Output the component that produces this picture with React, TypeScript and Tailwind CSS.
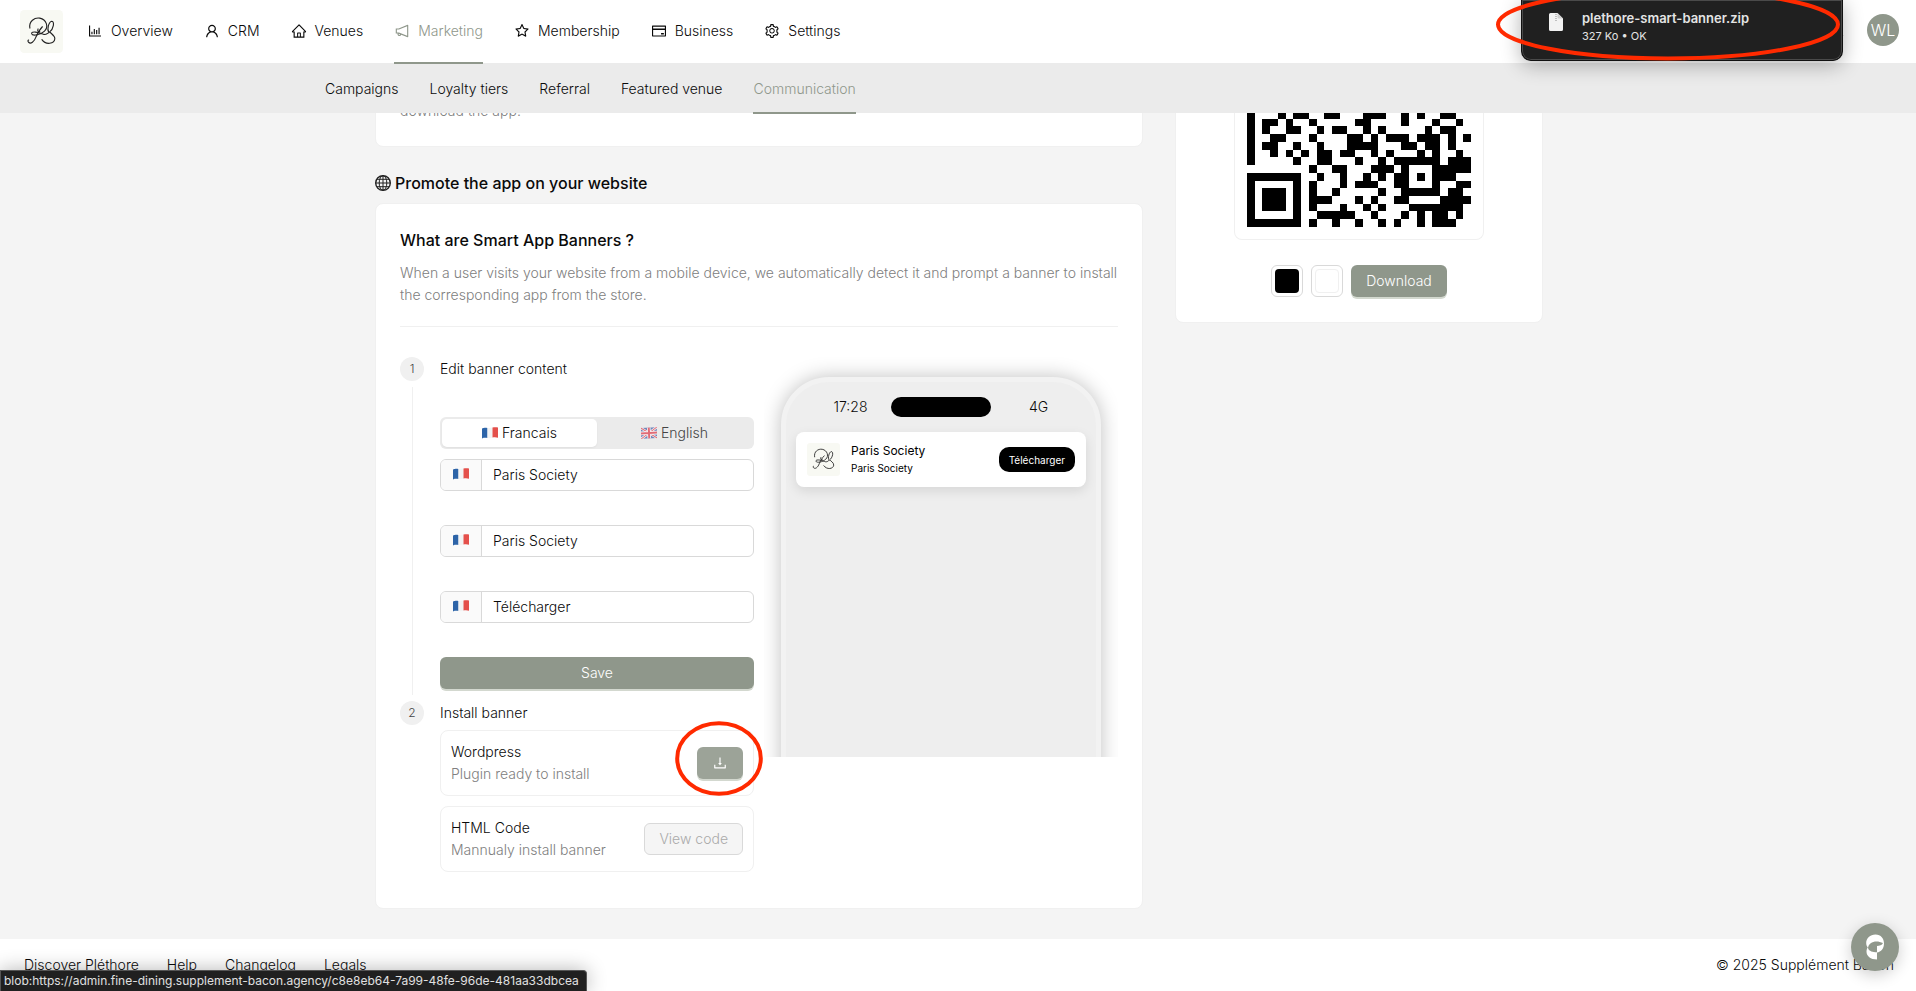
import type { ReactNode } from "react";
import {
  AiOutlineBarChart,
  AiOutlineCreditCard,
  AiOutlineDownload,
  AiOutlineHome,
  AiOutlineNotification,
  AiOutlineSearch,
  AiOutlineSetting,
  AiOutlineStar,
  AiOutlineUser,
} from "react-icons/ai";

const mainNav = [
  { label: "Overview", icon: AiOutlineBarChart },
  { label: "CRM", icon: AiOutlineUser },
  { label: "Venues", icon: AiOutlineHome },
  { label: "Marketing", icon: AiOutlineNotification, active: true },
  { label: "Membership", icon: AiOutlineStar },
  { label: "Business", icon: AiOutlineCreditCard },
  { label: "Settings", icon: AiOutlineSetting },
];

const subNav = [
  { label: "Campaigns" },
  { label: "Loyalty tiers" },
  { label: "Referral" },
  { label: "Featured venue" },
  { label: "Communication", active: true },
];

const qrRows = [
  "#...#.##..##...###..#.#..##..",
  "#.##.#..#.....##....#...#..#.",
  "#.#..##..#.##..#.#.....#.##..",
  "#..##...#....##.#.###.###.#.#",
  "#.##..#..#...####...##.##.#..",
  "#..#.#.#.##.##..#.#...#.#..#.",
  "#.....#..##...#..#.######.###",
  "........#..##...###.#...#####",
  "#######..#..#..#.#.##.#.###..",
  "#.....#.#...#.###..##...#..##",
  "#.###.#.#..#.....#..#####.##.",
  "#.###.#.###...#.#..##....####",
  "#.###.#.#...#..#.#...#######.",
  "#.....#..#####..#...#.#.##.#.",
  "#######.#..#..#..#.#..#.###..",
];

function Logo({ className }: { className: string }) {
  return (
    <svg viewBox="0 0 100 100" fill="none" className={className}>
      <rect width="100" height="100" rx="10" fill="#f8f9f3" />
      <g stroke="#222" strokeWidth="2.6" strokeLinecap="round">
        <path d="M23 42C20 26 34 17 46 19C62 22 67 40 57 49C49 57 29 62 27 55C26 49 43 51 53 56C58 58 62 57 65 54" />
        <path d="M52 39C45 46 41 54 37 63C33 74 25 80 20 75C18 73 18 71 20 70" />
        <path d="M42 44C40 49 42 51 46 50" />
        <path d="M67 53C62 44 67 27 74 26C81 27 78 44 69 51C72 55 81 59 81 67C80 79 60 82 51 69" />
      </g>
    </svg>
  );
}

function QrCode() {
  return (
    <svg
      viewBox="0 0 29 15"
      shapeRendering="crispEdges"
      role="img"
      className="block w-56"
    >
      {qrRows.map((row, y) =>
        row
          .split("")
          .map((cell, x) =>
            cell === "#" ? (
              <rect key={`${x}-${y}`} x={x} y={y} width="1" height="1" />
            ) : null,
          ),
      )}
    </svg>
  );
}

function FrenchFlag() {
  return (
    <svg viewBox="0 0 16 12" className="inline-block h-3 w-4 shrink-0">
      <path d="M0 1.4C2 .4 3.6.8 5.5 1v10C3.6 10.800 2 10.600 0 11.400Z" fill="#2d64a8" />
      <path d="M5.500 1C7.500 1.300 9 1 10.500.6v10c-1.500.5-3 .7-5 .4Z" fill="#f3f3f3" />
      <path d="M10.500.6C12.500 0 14.500.2 16 .5v10.200c-1.500-.4-3.500-.7-5.500-.1Z" fill="#e4504b" />
    </svg>
  );
}

function BritishFlag() {
  return (
    <svg viewBox="0 0 16 12" className="inline-block h-3 w-4 shrink-0 opacity-70">
      <g transform="rotate(-3 8 6)">
        <rect y=".6" width="16" height="10.800" fill="#3b5ba5" />
        <path d="M0 .6L16 11.400M16 .6L0 11.400" stroke="#fff" strokeWidth="2.400" />
        <path d="M0 .6L16 11.400M16 .6L0 11.400" stroke="#dc3545" strokeWidth="1" />
        <path d="M8 .6v10.800M0 6h16" stroke="#fff" strokeWidth="3.600" />
        <path d="M8 .6v10.800M0 6h16" stroke="#dc3545" strokeWidth="2" />
      </g>
    </svg>
  );
}

function GlobeIcon() {
  return (
    <svg
      viewBox="0 0 16 16"
      fill="none"
      stroke="#222"
      strokeWidth="1"
      className="size-4 shrink-0"
    >
      <circle cx="8" cy="8" r="7.300" strokeWidth="1.400" />
      <ellipse cx="8" cy="8" rx="3.800" ry="7.300" />
      <path d="M8 .7v14.600M.7 8h14.600M2 4.300h12M2 11.700h12" />
    </svg>
  );
}

function Card({ className = "", children }: { className?: string; children: ReactNode }) {
  return (
    <div className={`rounded-lg border border-[#f0f0f0] bg-white p-6 ${className}`}>
      {children}
    </div>
  );
}

function Header() {
  return (
    <header className="relative z-10">
      <div className="flex h-[63px] items-center bg-white pl-5 pr-[17px]">
        <a href="#home" className="mr-6">
          <Logo className="size-[43px]" />
        </a>
        <nav className="flex h-full gap-[31px]">
          {mainNav.map(({ label, icon: Icon, active }) => (
            <a
              key={label}
              href={`#${label.toLowerCase()}`}
              className={`relative flex items-center gap-2 pb-0.5 ${active ? "text-[#8f978b]" : ""}`}
            >
              <Icon className="size-4" />
              {label}
              {active && <span className="absolute inset-x-0 -bottom-px h-0.5 bg-[#8f978b]" />}
            </a>
          ))}
        </nav>
        <div className="ml-auto flex items-center gap-[22px] pb-[3px]">
          <AiOutlineSearch className="size-4" />
          <button className="size-8 rounded-full bg-[#8f978b] text-base text-white">WL</button>
        </div>
      </div>
      <nav className="flex h-[50px] gap-[31px] bg-[#ebebeb] pl-[325px]">
        {subNav.map(({ label, active }) => (
          <a
            key={label}
            href={`#${label.toLowerCase().replace(" ", "-")}`}
            className={`relative flex items-center pt-0.5 ${active ? "text-[#8f978b]" : ""}`}
          >
            {label}
            {active && <span className="absolute inset-x-0 -bottom-px h-0.5 bg-[#8f978b]" />}
          </a>
        ))}
      </nav>
    </header>
  );
}

function BannerInput({ label, value }: { label: string; value: string }) {
  return (
    <div className="flex h-8 overflow-hidden rounded-md border border-[#d9d9d9]">
      <span className="flex w-[41px] shrink-0 justify-center border-r border-[#d9d9d9] bg-[#fafafa] pt-2">
        <FrenchFlag />
      </span>
      <input
        aria-label={label}
        defaultValue={value}
        className="w-full min-w-0 px-[11px] outline-none"
      />
    </div>
  );
}

function Step({ number, title, children }: { number: number; title: string; children: ReactNode }) {
  return (
    <div className="flex gap-4 pb-3">
      <div className="flex flex-col items-center">
        <span className="flex size-6 items-center justify-center rounded-full bg-[#f0f0f0] text-xs text-[#444]">
          {number}
        </span>
        {number === 1 && <span className="-mb-1.5 mt-1.5 w-px flex-1 bg-[#f0f0f0]" />}
      </div>
      <div className="min-w-0 flex-1">
        <h4 className="leading-6">{title}</h4>
        {children}
      </div>
    </div>
  );
}

function InstallRow({ title, text, children }: { title: string; text: string; children: ReactNode }) {
  return (
    <div className="flex h-[66px] items-center justify-between rounded-lg border border-[#f0f0f0] px-2.5">
      <div>
        <p>{title}</p>
        <p className="text-[#808080]">{text}</p>
      </div>
      {children}
    </div>
  );
}

function PhonePreview() {
  return (
    <div className="flex h-[400px] justify-center overflow-hidden pt-5">
      <div className="h-[600px] w-80 rounded-[48px] border-[5px] border-[#f2f2f2] bg-[#eee] px-2.5 shadow-[0_0_20px_rgba(0,0,0,0.25)]">
        <div className="grid grid-cols-[1fr_100px_1fr] items-center pt-3.5 text-center">
          <span className="pl-3.5">17:28</span>
          <span className="h-5 rounded-full bg-black" />
          <span>4G</span>
        </div>
        <div className="mt-3.5 flex h-[55px] items-center rounded-lg bg-white px-[11px] shadow-[0_4px_12px_rgba(0,0,0,0.1)]">
          <Logo className="size-[33px]" />
          <div className="ml-[11px] pb-0.5 font-normal text-black">
            <p className="text-xs leading-[18px]">Paris Society</p>
            <p className="text-[10px] leading-4">Paris Society</p>
          </div>
          <button className="ml-auto h-[25px] rounded-[10px] bg-black px-2.5 text-[10px] font-normal text-white">
            Télécharger
          </button>
        </div>
      </div>
    </div>
  );
}

function SmartBanners() {
  return (
    <Card>
      <h3 className="text-base font-medium leading-6">What are Smart App Banners ?</h3>
      <p className="mt-2.5 text-[#808080]">
        When a user visits your website from a mobile device, we automatically detect it and
        prompt a banner to install the corresponding app from the store.
      </p>
      <hr className="mt-5 border-[#f0f0f0]" />
      <div className="mt-[30px] grid grid-cols-2 items-start gap-2.5">
        <div>
          <Step number={1} title="Edit banner content">
            <div className="mt-9 grid h-8 grid-cols-2 rounded-md bg-[#ebebeb] p-0.5">
              <button className="flex items-center justify-center gap-1 rounded-[5px] bg-white shadow-xs">
                <FrenchFlag /> Francais
              </button>
              <button className="flex items-center justify-center gap-1 text-[#444]">
                <BritishFlag /> English
              </button>
            </div>
            <form className="mt-2.5 flex flex-col gap-[34px]">
              <BannerInput label="Title" value="Paris Society" />
              <BannerInput label="Subtitle" value="Paris Society" />
              <BannerInput label="Button" value="Télécharger" />
              <button
                type="button"
                className="h-8 rounded-md bg-[#8f978b] text-white shadow-[0_2px_0_#d3d8cf]"
              >
                Save
              </button>
            </form>
          </Step>
          <Step number={2} title="Install banner">
            <div className="mt-[5px] flex flex-col gap-2.5">
              <InstallRow title="Wordpress" text="Plugin ready to install">
                <div className="relative">
                  <button
                    aria-label="Download"
                    className="flex h-8 w-[46px] items-center justify-center rounded-md bg-[#9ca398] text-white shadow-[0_2px_0_#d3d8cf]"
                  >
                    <AiOutlineDownload className="size-4" />
                  </button>
                  <svg
                    viewBox="0 0 88 75"
                    fill="none"
                    className="pointer-events-none absolute -left-[22px] -top-[26px] h-[75px] w-[88px]"
                  >
                    <ellipse cx="44" cy="37.500" rx="41.800" ry="35.300" stroke="#ff2a00" strokeWidth="4" />
                  </svg>
                </div>
              </InstallRow>
              <InstallRow title="HTML Code" text="Mannualy install banner">
                <button
                  disabled
                  className="h-8 rounded-md border border-[#d9d9d9] bg-[#f5f5f5] px-3.5 text-[#aaa]"
                >
                  View code
                </button>
              </InstallRow>
            </div>
          </Step>
        </div>
        <PhonePreview />
      </div>
    </Card>
  );
}

function QrCard() {
  return (
    <Card className="flex flex-col items-center">
      <div className="rounded-b-lg border border-t-0 border-[#f0f0f0] px-3 pb-3 pt-[11px]">
        <QrCode />
      </div>
      <div className="mt-6 flex h-[34px] items-center gap-2">
        <button aria-label="Foreground" className="size-8 rounded-md border border-[#d9d9d9] p-[3px]">
          <span className="block size-6 rounded bg-black" />
        </button>
        <button aria-label="Background" className="size-8 rounded-md border border-[#d9d9d9] p-[3px]">
          <span className="block size-6 rounded border border-[#f0f0f0] bg-white" />
        </button>
        <button className="h-8 rounded-md bg-[#8f978b] px-[15px] text-white shadow-[0_2px_0_#d3d8cf]">
          Download
        </button>
      </div>
    </Card>
  );
}

function DownloadPopup() {
  return (
    <div className="absolute right-[73px] top-0 z-20 flex h-[61px] w-[322px] gap-[19px] rounded-b-[10px] border border-t-0 border-[#111] bg-[#202020] pl-[27px] pt-2 text-[#e4e4e4] shadow-[0_4px_20px_rgba(0,0,0,0.3),inset_0_0_0_1px_#4a4a4a]">
      <svg viewBox="0 0 14 18" className="mt-[5px] h-[18px] w-3.5">
        <path d="M1.500 0H8.500L14 5.500V16.500A1.500 1.500 0 0 1 12.500 18H1.500A1.500 1.500 0 0 1 0 16.500V1.500A1.500 1.500 0 0 1 1.500 0Z" fill="#f2f2f2" />
        <path d="M8.500 0L14 5.500H9.500A1 1 0 0 1 8.500 4.500Z" fill="#cfcfcf" />
        <path d="M7 1v8" stroke="#aaa" strokeWidth="1.400" strokeDasharray="1 1" />
      </svg>
      <div>
        <p className="text-[13px] font-semibold leading-5">plethore-smart-banner.zip</p>
        <p className="text-[11px] font-normal leading-4">327 Ko • OK</p>
      </div>
      <svg
        viewBox="0 0 346 73"
        fill="none"
        className="pointer-events-none absolute -left-[27px] -top-3 h-[73px] w-[346px]"
      >
        <ellipse cx="173" cy="36.500" rx="170" ry="34" stroke="#ff2a00" strokeWidth="4" />
      </svg>
    </div>
  );
}

function Footer() {
  return (
    <footer className="flex h-[52px] items-center justify-between bg-white pl-6 pr-[22px]">
      <nav className="flex gap-7">
        <a href="#discover">Discover Pléthore</a>
        <a href="#help">Help</a>
        <a href="#changelog">Changelog</a>
        <a href="#legals">Legals</a>
      </nav>
      <p>© 2025 Supplément Bacon</p>
    </footer>
  );
}

export default function App() {
  return (
    <div className="relative flex min-h-screen flex-col overflow-hidden bg-[#f4f4f4] font-['Inter',sans-serif] text-sm font-light leading-[22px] text-[#0a0a0a]">
      <Header />
      <DownloadPopup />

      <main className="mx-auto -mt-[38px] mb-[30px] grid w-full max-w-[1170px] flex-1 grid-cols-[minmax(0,768fr)_minmax(0,368fr)] items-start gap-8 pl-0.5">
        <div>
          <Card>
            <p className="text-[#808080]">download the app.</p>
          </Card>
          <h2 className="mb-2 mt-6 flex items-center gap-1 text-base font-medium leading-6">
            <GlobeIcon />
            Promote the app on your website
          </h2>
          <SmartBanners />
        </div>
        <QrCard />
      </main>

      <Footer />

      <button
        aria-label="Help"
        className="absolute bottom-5 right-[17px] z-10 size-12 rounded-full bg-[#8f978b] shadow-[0_4px_16px_rgba(0,0,0,0.2)]"
      >
        <svg viewBox="0 0 48 48" className="size-12">
          <path d="M24.500 11.500C30 11.500 33 15.500 33 20.500C33 25.500 30 29 26 29.500V36.500C19.500 36.500 15.500 33 15.500 28.500C15.500 27 16 25.500 16.800 24.500C15.800 23.300 15.200 21.800 15.200 20C15.200 15.200 19 11.500 24.500 11.500Z" fill="#fff" />
          <path d="M17 25C17.500 19 25 16.500 32 20C31 22.500 28.500 22.800 26 23V29.200C22 29.200 18 28.500 17 25Z" fill="#8f978b" />
        </svg>
      </button>
      <div className="absolute bottom-0 left-0 z-10 h-[21px] rounded-tr border border-b-0 border-[#555] bg-[#202020] pl-[3px] pr-[7px] text-xs font-normal leading-5 text-[#e0e0e0] shadow-[0_0_20px_rgba(0,0,0,0.3)]">
        blob:https://admin.fine-dining.supplement-bacon.agency/c8e8eb64-7a99-48fe-96de-481aa33dbcea
      </div>
    </div>
  );
}
